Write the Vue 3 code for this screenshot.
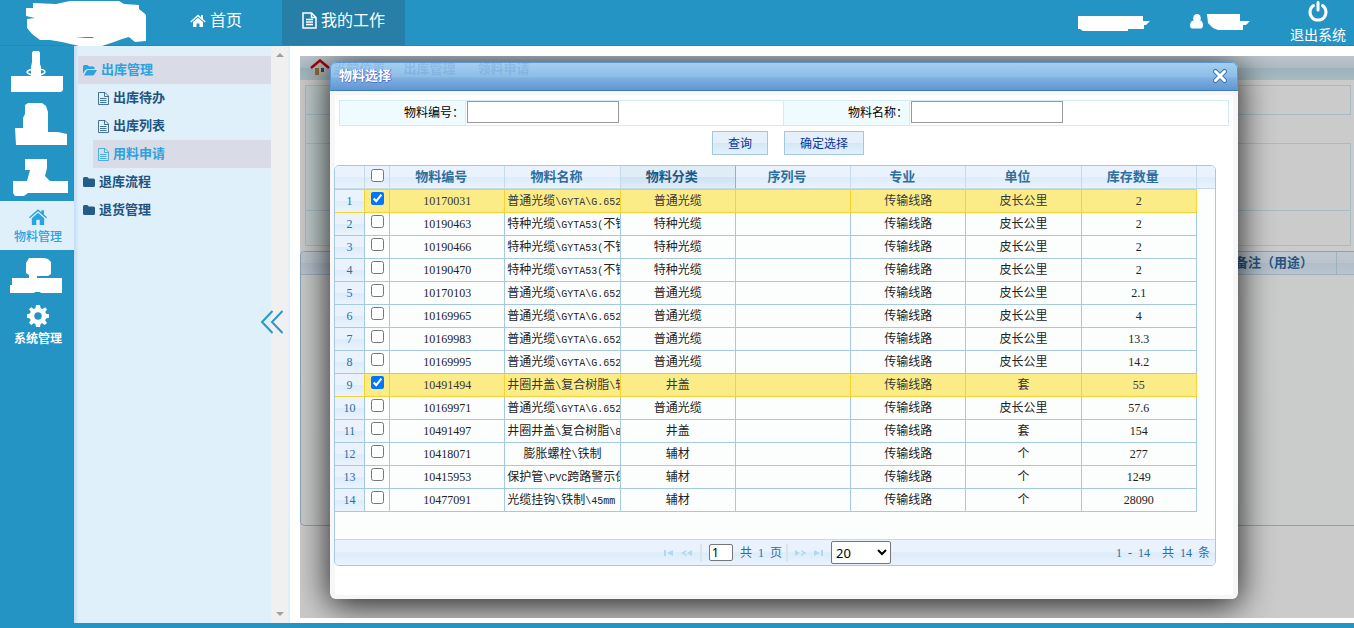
<script setup>
import { ref } from 'vue'

const rows = ref([
  ['10170031', '普通光缆\\GYTA\\G.652', '普通光缆', '皮长公里', '2', true],
  ['10190463', '特种光缆\\GYTA53(不锈钢', '特种光缆', '皮长公里', '2', false],
  ['10190466', '特种光缆\\GYTA53(不锈钢', '特种光缆', '皮长公里', '2', false],
  ['10190470', '特种光缆\\GYTA53(不锈钢', '特种光缆', '皮长公里', '2', false],
  ['10170103', '普通光缆\\GYTA\\G.652', '普通光缆', '皮长公里', '2.1', false],
  ['10169965', '普通光缆\\GYTA\\G.652', '普通光缆', '皮长公里', '4', false],
  ['10169983', '普通光缆\\GYTA\\G.652', '普通光缆', '皮长公里', '13.3', false],
  ['10169995', '普通光缆\\GYTA\\G.652', '普通光缆', '皮长公里', '14.2', false],
  ['10491494', '井圈井盖\\复合树脂\\轻型', '井盖', '套', '55', true],
  ['10169971', '普通光缆\\GYTA\\G.652', '普通光缆', '皮长公里', '57.6', false],
  ['10491497', '井圈井盖\\复合树脂\\800', '井盖', '套', '154', false],
  ['10418071', '膨胀螺栓\\铁制', '辅材', '个', '277', false],
  ['10415953', '保护管\\PVC跨路警示保护', '辅材', '个', '1249', false],
  ['10477091', '光缆挂钩\\铁制\\45mm', '辅材', '个', '28090', false]
].map(([code, name, kind, unit, stock, checked]) => ({ code, name, kind, unit, stock, checked })))

const columns = ['物料编号', '物料名称', '物料分类', '序列号', '专业', '单位', '库存数量']
const code = ref('')
const name = ref('')
const page = ref('1')
const size = ref('20')

// Splits a name into Latin and Chinese runs so each gets its own face
const runs = (text) => text.match(/[\x20-\x7e]+|[^\x20-\x7e]+/g).map((t) => ({ t, latin: t.charCodeAt(0) < 128 }))
</script>

<template>
  <div class="app">
    <header class="top">
      <div class="brand">
        <svg width="122" height="46" viewBox="0 0 122 46" fill="#fff"><path d="M0 8H7V3L30 4 44 1 93 1 98 4 113 5V9L118 13 120 15V41L109 42 103 37 96 39 88 42 76 46 53 46 36 42 24 40H14L6 34 1 28V19L9 18 0 16Z" /><path d="M50 37H67L68 38H59L50 37Z" fill="#2494c5" /></svg>
      </div>
      <nav class="tabs">
        <a href="#" class="tab">
          <svg width="16" height="14" viewBox="0 0 16 14" fill="#fff"><path d="M8 0.500 11 3.200V1.300H13V5L15.700 7.500 14.800 8.500 8 2.600 1.200 8.500.3 7.500ZM8 3.800 13 8.100V13H9.500V9.500H6.500V13H3V8.100Z" /></svg>首页</a>
        <a href="#" class="tab active">
          <svg width="15" height="17" viewBox="0 0 15 17" fill="none" stroke="#fff" stroke-width="1.500"><path d="M1 1H9.500L14 5.500V16H1ZM9.500 1V5.500H14M4 7.500H11M4 10H11M4 12.500H11" /></svg>我的工作</a>
      </nav>
      <div class="account">
        <svg width="72" height="17" viewBox="0 0 72 17" fill="#fff"><path d="M0 2H65V7H72L68 11H66V15H50V17H5L2 15H0Z" /></svg>
        <svg class="user" width="60" height="18" viewBox="0 0 60 18" fill="#fff"><ellipse cx="7" cy="5.500" rx="3.800" ry="4.500" /><path d="M0 13Q0 8 3.500 7.500Q7 11 10.500 7.500Q13 8 13 13Q12.500 15.500 11 15.500H2Q.5 15.500 0 13ZM17 1H50V8H60L56 12H53V17H28L23 15 18 10Z" /></svg>
        <button class="exit">
          <svg width="22" height="23" viewBox="0 0 22 23" fill="none" stroke="#fff" stroke-width="3" stroke-linecap="round"><path d="M6.500 5.500A8 8 0 1 0 15.500 5.500M11 2.500V10" /></svg>
          退出系统
        </button>
      </div>
    </header>

    <div class="body">
      <nav class="rail">
        <svg class="blobs" width="74" height="155" viewBox="0 0 74 155"><path d="M27 26Q29 23 36 23Q45 23 45 26Q44 29 36 29Q28 29 27 26Z" fill="none" stroke="#fff" stroke-width="1.500" /><path fill="#fff" d="M32 7 33 5H39L40 7V18L41 21V30H63V44L61 46H11V30H31V21L32 16ZM25 59 28 57H42L46 60 48 66V86H58L67 88V99H16L15 82H23V72L25 68ZM25 113H47V122L45 130 50 135H68V147H28L24 150H15L13 147V135H27L30 124H25Z" /></svg>
        <a href="#" class="module current">
          <svg width="18" height="16" viewBox="0 0 16 14" fill="#2aa3e0"><path d="M8 0 11 2.700V1H13.300V4.800L16 7.300 15.200 8.200 8 1.800.8 8.200 0 7.300ZM8 3.300 13.500 8.100V14H9.500V9.500H6.500V14H2.500V8.100Z" /></svg>
          物料管理
        </a>
        <svg class="blobs" width="74" height="53" viewBox="0 0 74 53" fill="#fff"><path d="M29 8H44L48 9 51 12V24L48 26H37V28H62V43H41L40 42H35L34 43H10V35H12V28H29V25L26 23V13Z" /></svg>
        <a href="#" class="module">
          <svg width="22" height="22" viewBox="0 0 22 22" fill="#fff"><path fill-rule="evenodd" d="M9 0H13L13.700 3.200 15.500 4 18.200 2.200 20 4.500 18.300 6.800 19 8.700 22 9.200V12.800L19 13.500 18.200 15.300 20 18 17.800 20 15.200 18.200 13.600 19 13 22H9L8.400 19 6.600 18.200 4.200 20 2 17.800 3.700 15.300 3 13.400 0 12.800V9.200L3 8.600 3.700 6.700 2 4.200 4.200 2.200 6.700 3.900 8.400 3.200ZM11 7.300A3.700 3.700 0 1 0 11 14.700A3.700 3.700 0 1 0 11 7.300Z" /></svg>
          系统管理
        </a>
      </nav>

      <aside class="side">
        <ul class="tree">
          <li><a href="#" class="node hot"><svg width="14" height="11" viewBox="0 0 14 11" fill="#2aa3e0"><path d="M0 8.500V1.500Q0 0 1.500 0H4.500L6 1.500H10Q11.500 1.500 11.500 3V4H4.500Q3 4 2 5.500ZM1 10.500 3.500 6Q4 5 5 5H14L11 9.800Q10.500 10.500 9.500 10.500Z" /></svg>出库管理</a></li>
          <li class="sub" v-for="(t, i) in ['出库待办', '出库列表', '用料申请']" :key="t">
            <a href="#" class="node" :class="{ hot: i === 2 }"><svg width="12" height="13" viewBox="0 0 12 13" fill="none" stroke="currentColor" stroke-opacity=".8"><path d="M1.500 .5H8L11.500 4V12.500H1.500ZM7.500 .5V4.500H11.500M3 6.500H9.500M3 8.500H9.500M3 10.500H9.500" /></svg>{{ t }}</a>
          </li>
          <li v-for="t in ['退库流程', '退货管理']" :key="t"><a href="#" class="node"><svg width="12" height="10" viewBox="0 0 12 10" fill="#245c8a"><path d="M0 1.500Q0 0 1.500 0H4Q5.500 0 5.500 1.500H10.500Q12 1.500 12 3V8.500Q12 10 10.500 10H1.500Q0 10 0 8.500Z" /></svg>{{ t }}</a></li>
        </ul>
        <div class="scroll">
          <svg width="8" height="4" viewBox="0 0 8 4" fill="#a0a0a0"><path d="M0 4 4 0 8 4Z" /></svg>
          <svg width="8" height="4" viewBox="0 0 8 4" fill="#a0a0a0"><path d="M0 0H8L4 4Z" /></svg>
        </div>
        <button class="fold" aria-label="收起"><svg width="24" height="24" viewBox="0 0 24 24" fill="none" stroke="#2a97c9" stroke-width="2"><path d="M12.500 1 2 12 12.500 23M22.500 1 12 12 22.500 23" /></svg></button>
      </aside>

      <main class="frame">
        <div class="crumbs">
          <svg width="20" height="18" viewBox="0 0 20 18"><path d="M3 8 10 3 16 8V16H3Z" fill="#b9b5a9" /><path d="M5 9H9V16H5Z" fill="#866d45" /><path d="M11 9H14V13H11Z" fill="#28477c" /><path d="M1 9 10 1.500 19 9" fill="none" stroke="#a60010" stroke-width="2.500" /></svg>
        </div>
        <div class="under">
          <div class="panel one"></div>
          <div class="panel two"></div>
          <div class="labels"><i></i><i></i><i></i><i></i></div>
        </div>
        <div class="list">
          <div class="listhead"><b>备注（用途）</b><i></i></div>
        </div>

        <section class="dialog">
          <div class="bar">
            <h2>物料选择</h2>
            <p class="ghost"><span>当前位置 -</span><span>出库管理</span><span class="leaf">领料申请</span></p>
            <button class="close" aria-label="关闭"><svg width="16" height="16" viewBox="0 0 16 16" fill="none" stroke-linecap="round"><path d="M3.500 3.500 12.500 12.500M12.500 3.500 3.500 12.500" stroke="#4078b8" stroke-width="5" /><path d="M3.500 3.500 12.500 12.500M12.500 3.500 3.500 12.500" stroke="#fff" stroke-width="3" /></svg></button>
          </div>
          <div class="content">
            <form class="query" @submit.prevent>
              <label for="code">物料编号：</label>
              <div class="field"><input id="code" v-model="code" type="text"></div>
              <label for="name">物料名称：</label>
              <div class="field"><input id="name" v-model="name" type="text"></div>
            </form>
            <div class="actions">
              <button>查询</button>
              <button>确定选择</button>
            </div>
            <div class="grid">
              <table>
                <colgroup><col class="c-num"><col class="c-box"><col v-for="c in columns" :key="c"><col class="c-end"></colgroup>
                <thead>
                  <tr>
                    <th></th>
                    <th class="all"><input type="checkbox" aria-label="全选"></th>
                    <th v-for="(c, i) in columns" :key="c" class="label" :class="{ sorted: i === 2 }">{{ c }}</th>
                    <th class="end"></th>
                  </tr>
                </thead>
                <tbody>
                  <tr v-for="(r, i) in rows" :key="r.code" :class="{ picked: r.checked }">
                    <td class="num">{{ i + 1 }}</td>
                    <td class="box"><input v-model="r.checked" type="checkbox" :aria-label="r.code"></td>
                    <td>{{ r.code }}</td>
                    <td class="name" :class="{ short: r.name.length < 8 }"><span v-for="(p, k) in runs(r.name)" :key="k" :class="{ latin: p.latin }">{{ p.t }}</span></td>
                    <td>{{ r.kind }}</td>
                    <td></td>
                    <td>传输线路</td>
                    <td>{{ r.unit }}</td>
                    <td>{{ r.stock }}</td>
                    <td class="end"></td>
                  </tr>
                </tbody>
              </table>
              <footer class="pager">
                <div class="pages">
                  <button aria-label="首页"><svg width="10" height="6" viewBox="0 0 10 6" fill="#b4d6ee"><path d="M0 0H2V6H0ZM9 0V6L3 3Z" /></svg></button>
                  <button aria-label="上一页"><svg width="12" height="6" viewBox="0 0 12 6" fill="#b4d6ee"><path d="M5.500 0V1.500L3 3 5.500 4.500V6L0 3ZM11 0V6L6 3Z" /></svg></button>
                  <i></i>
                  <input v-model="page" class="page" type="text" aria-label="页码">
                  <span class="count">共&nbsp; 1&nbsp; 页</span>
                  <i></i>
                  <button aria-label="下一页"><svg width="12" height="6" viewBox="0 0 12 6" fill="#b4d6ee"><path d="M0 0 5 3 0 6ZM6 0 11.500 3 6 6V4.500L8.500 3 6 1.500Z" /></svg></button>
                  <button aria-label="末页"><svg width="10" height="6" viewBox="0 0 10 6" fill="#b4d6ee"><path d="M0 0 6 3 0 6ZM7 0H9V6H7Z" /></svg></button>
                  <select v-model="size" aria-label="每页条数"><option>20</option><option>50</option></select>
                </div>
                <span class="total">1&nbsp; -&nbsp; 14&nbsp;&nbsp;&nbsp; 共&nbsp; 14&nbsp; 条</span>
              </footer>
            </div>
          </div>
        </section>
      </main>
    </div>
  </div>
</template>

<style>
body { margin: 0; overflow: hidden; }
</style>

<style scoped>
* { box-sizing: border-box; }
.app { display: flex; flex-direction: column; height: 100vh; border-bottom: 5px solid #2494c5; font: 12px/16px "Liberation Serif", "Noto Sans CJK SC", sans-serif; background: #fff; }
a { text-decoration: none; color: inherit; }
button { font: inherit; color: inherit; padding: 0; border: 0; background: none; }
svg { display: block; flex: none; }

.top { display: flex; flex: none; height: 46px; background: #2494c5; color: #fff; border-bottom: 1px solid #2388b5; }
.brand { width: 150px; padding-left: 26px; }
.tabs { display: flex; font-size: 16px; }
.tab { display: flex; align-items: center; gap: 4px; padding: 0 40px 4px; height: 45px; }
.tab.active { background: #277fa8; padding: 0 20px 4px; }
.account { display: flex; margin-left: auto; padding-right: 8px; }
.account > svg { margin-top: 14px; }
.account > .user { margin: 13px 40px 0; }
.exit { display: flex; flex-direction: column; align-items: center; gap: 4px; font-size: 14px; line-height: 18px; }

.body { display: flex; flex: 1; min-height: 0; }
.rail { width: 74px; background: #2494c5; flex: none; }
.module { display: flex; flex-direction: column; align-items: center; gap: 4px; height: 49px; padding-top: 2px; padding-left: 2px; color: #fff; font-weight: bold; }
.current { padding-top: 8px; background: #dff0fb; color: #2aa3e0; font-weight: 500; }
.side { position: relative; display: flex; width: 216px; flex: none; background: linear-gradient(90deg, #c3dcf3, #dff0fb 5px); border-right: 2px solid #dff0fb; }
.tree { flex: 1; margin: 0; padding: 10px 0 0 4px; list-style: none; }
.sub { padding-left: 15px; }
.node { display: flex; align-items: center; gap: 4px; height: 28px; padding-left: 5px; color: #1f5580; font-size: 13px; font-weight: bold; }
.sub .node { padding-left: 4px; }
.node.hot { background: #d9dbe6; color: #2aa3e0; }
.scroll { display: flex; flex-direction: column; align-items: center; justify-content: space-between; width: 17px; padding: 7px 0; background: #f0f0f0; }
.fold { position: absolute; right: 4px; top: 264px; }

.frame { position: relative; flex: 1; min-width: 0; margin: 10px 0 5px 10px; overflow: hidden; background: #cbcbcb; }
.crumbs { height: 24px; padding: 3px 10px; background: linear-gradient(#bcc5cb, #abbac1 50%, #9eb2bc 51%, #a9bac1); }
.under { position: relative; height: 171px; padding: 5px 3px 0 5px; }
.panel { border: 1px solid #a6bcc6; }
.one { height: 30px; }
.two { height: 103px; margin-top: 28px; background: linear-gradient(#a6bcc6, #a6bcc6) 0 66px / 100% 1px no-repeat; }
.labels { position: absolute; left: 5px; top: 5px; display: grid; grid-template-rows: 29px 29px 67px 35px; width: 124px; background: #c1cccc; border: solid #a6bcc6; border-width: 1px 0 0 1px; }
.labels i { border-bottom: 1px solid #a6bcc6; }
.list { height: 275px; border: 1px solid #8aa2b3; border-right: 0; border-radius: 5px 0 0 5px; background: linear-gradient(#cbcbcb, #c9cccb); overflow: hidden; }
.listhead { display: flex; align-items: center; justify-content: flex-end; height: 23px; border-bottom: 1px solid #9cb0bd; background: linear-gradient(#bfc7cf, #bac4cd 50%, #b1bdc9 51%, #bac4cd); color: #245482; font-size: 13px; }
.listhead i { height: 23px; width: 18px; margin-left: 23px; border-left: 1px solid #9cb0bd; }

.dialog { position: absolute; left: 30px; right: 116px; top: 6px; border-radius: 6px; background: #f7f7f7; box-shadow: 0 5px 34px 1px rgba(0, 0, 0, .85); }
.bar { position: relative; display: flex; align-items: center; justify-content: space-between; height: 29px; padding: 0 9px 1px 8px; border: 1px solid #5899da; border-bottom-color: #3b7cbf; border-radius: 6px 6px 0 0; background: linear-gradient(#a5cff1, #8cbde8 50%, #7fb0e2 56%, #5f96d2); }
h2 { margin: 0; font-size: 13px; color: #fff; text-shadow: 1px 0 #5563cf, 0 1px #5574c8; z-index: 1; }
.ghost { position: absolute; left: 2px; top: -2px; display: flex; gap: 11px; margin: 0; font-size: 13px; font-weight: bold; color: rgba(65, 120, 180, .2); }
.ghost .leaf { margin-left: 11px; }
.content { margin: 0 5px; padding: 9px 4px 29px; border: solid #f7f7f7; border-width: 0 0 4px; background: #fff; box-shadow: inset 0 4px #f7f7f7; }
.query { display: grid; grid-template-columns: 126px 1fr 126px 1fr; height: 26px; border: 1px solid #d4ebf6; }
.query label { display: flex; align-items: center; justify-content: flex-end; padding-right: 1px; background: #f0fbff; border-right: 1px solid #d4ebf6; color: #000; }
.field { padding-left: 1px; border-right: 1px solid #d4ebf6; }
.field:last-child { border-right: 0; }
.field input { display: block; width: 152px; height: 22px; border: 1px solid #999; background: #fff; }
.actions { display: flex; justify-content: center; gap: 16px; padding: 5px 0 10px 8px; }
.actions button { height: 24px; padding: 2px 15px 0; border: 1px solid #a3c7de; background: linear-gradient(#e5f0fb 50%, #d3e8f6 52%, #e3f1fb); color: #0b349b; }
.grid { margin: 0 13px 0 -5px; border: 1px solid #a6c9e2; border-radius: 5px; background: #fcfefe; overflow: hidden; }
table { width: 100%; table-layout: fixed; border-collapse: separate; border-spacing: 0; margin-bottom: 27px; }
.c-num { width: 30px; }
.c-box { width: 25px; }
.c-end { width: 18px; }
th, td { padding: 0; height: 23px; border: solid #a6c9e2; border-width: 0 1px 1px 0; text-align: center; overflow: hidden; white-space: nowrap; line-height: 16px; }
th { border-color: #c5dbec; background: linear-gradient(#eaf3fd 50%, #dcecfa 52%, #eaf3fd); color: #2e6e9e; font-size: 13px; }
th.label { padding-right: 12px; }
th.sorted { background: linear-gradient(#dfedf7 50%, #cee2f0 52%, #e0edf7); border-right-color: #79b7e7; color: #1d5987; }
td { color: #222; }
td.num { background: linear-gradient(#eaf3fd 50%, #dcecfa 52%, #eaf3fd); color: #2e6e9e; }
th.end, td.end { border-right: 0; }
td.end { border-bottom: 0; }
td.name { padding-left: 2px; text-align: left; text-overflow: clip; }
td.short { padding: 0; text-align: center; }
.latin { font: 10px/12px "Liberation Mono", monospace; }
.picked td:not(.end) { background: #fbec88; border-color: #f8d22e; color: #363636; }
.picked td.num:not(.end) { background: linear-gradient(#eaf3fd 50%, #dcecfa 52%, #eaf3fd); color: #2e6e9e; }
tbody tr:first-child td { height: 24px; }
tbody tr:first-child.picked td:not(.end) { border-top: 1px solid #f8d22e; }
input[type="checkbox"] { display: block; width: 13px; height: 13px; margin: 2px auto 7px; }
th input[type="checkbox"] { margin-bottom: 6px; }
td.box, th.all { padding: 0; line-height: 0; }
.pager { display: grid; grid-template-columns: 1fr auto 1fr; align-items: center; height: 26px; padding: 0 5px; border-top: 1px solid #c5dbec; background: linear-gradient(#eaf3fd 45%, #dcecfa 52%, #eaf3fd); color: #2e6e9e; }
.pages { grid-column: 2; display: flex; align-items: center; gap: 7px; padding-left: 5px; }
.pages i { width: 2px; height: 18px; background: #dbe3e9; }
.pages .page { width: 24px; height: 17px; padding: 0 2px; border: 1px solid #767676; border-radius: 2px; font: 12px "Noto Sans"; background: #fff; }
.pages .count { margin-right: -3px; white-space: nowrap; }
.pages select { height: 23px; width: 60px; padding: 0; border: 1px solid #767676; border-radius: 2px; background: #fff; color: #000; font: 13px "Noto Sans"; }
.total { justify-self: end; }
</style>
